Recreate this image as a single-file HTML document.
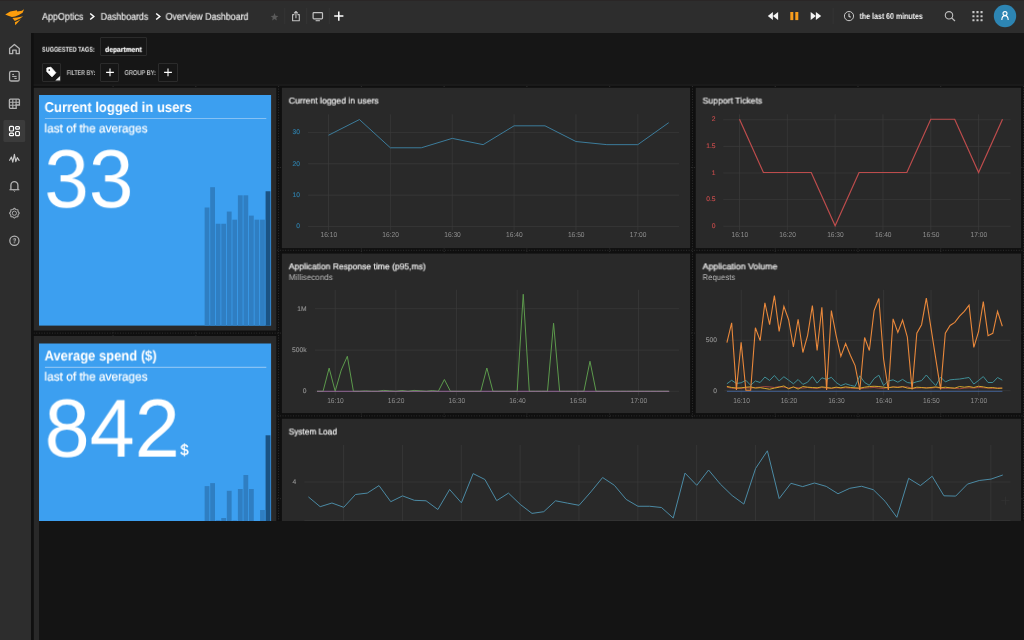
<!DOCTYPE html>
<html lang="en">
<head>
<meta charset="utf-8">
<title>Overview Dashboard - AppOptics</title>
<style>
*{box-sizing:border-box}
html,body{margin:0;padding:0}
body{width:1024px;height:640px;overflow:hidden;background:#161616;font-family:"Liberation Sans",sans-serif;position:relative;color:#eee}
.t{will-change:transform;text-rendering:geometricPrecision;position:absolute;white-space:pre;line-height:1;transform-origin:0 0;margin:0;padding:0;border:0;background:none;font-family:inherit;font-weight:normal;text-decoration:none;display:block}
.ic{position:absolute;display:block;overflow:visible}
.topbar{position:absolute;left:0;top:0;width:1024px;height:33px;background:#2d2d2d;z-index:5;box-shadow:inset 0 1px 0 #2a2626}
.side{position:absolute;left:0;top:33px;width:31px;height:607px;background:#2d2d2d;z-index:4;box-shadow:2.6px 0 0 #101010}
.filters{position:absolute;left:0;top:0;width:1024px;height:86px;z-index:3}
.filters:after{content:"";position:absolute;left:31px;top:84px;width:993px;height:2px;background:#1a1a1a}
.chip{position:absolute;border:1px solid #2b2b2b;border-radius:1px;display:block}
.grid{position:absolute;left:31px;top:86px;width:993px;height:554px;background:#0f0f0f;z-index:1}
.grid>.ic.guides{left:0!important;top:0!important}
.panel{position:absolute;overflow:hidden;margin:0}
.grid .panel{margin-left:-31px;margin-top:-86px}
.cv{position:absolute;left:0;top:0;display:block;will-change:transform}
.ttl{-webkit-text-stroke:0.18px #f0f0f0}
.ts{-webkit-text-stroke:0.2px #fff}
.tag{-webkit-text-stroke:0.15px #fff}
.tu{-webkit-text-stroke:0.3px #fff}
.crumbs .t{-webkit-text-stroke:0.2px #e4e4e4}
.cv text{font-family:"Liberation Sans",sans-serif;text-rendering:geometricPrecision}
.mask{position:absolute;left:39px;top:521px;width:985px;height:119px;background:#141414;z-index:6}
</style>
</head>
<body>
<header class="topbar"><a class="logo" title="SolarWinds"><svg class="ic " style="left:0px;top:0px" width="32" height="33" viewBox="0 0 32 33" role="img" aria-label="SolarWinds"><path fill="#fc9d0c" d="M5.2 14.5 L10.2 11.6 L16.9 10.3 L17.3 11.5 L21.8 10.7 L24.1 9.2 L22.6 12.8 L18.8 15.0 L15.0 16.6 L11.9 16.9 L8.2 15.7 Z"/><path fill="#fc9d0c" d="M12.4 18.1 L17 17.6 L23.2 16.2 L20.1 18.5 L14.8 20.9 Z"/><path fill="#fc9d0c" d="M14.9 22.3 L17.6 21 L20.7 19.3 L17.6 22.8 L15.3 25.2 Z"/></svg></a><nav class="crumbs" aria-label="Breadcrumb"><a class="t" style="left:42px;top:12px;font-size:10.0px;color:#e4e4e4;transform:translate(0.00px,0.86px) rotate(0.01deg) scaleX(0.8952);">AppOptics</a><svg class="ic chev" style="left:88.0px;top:11px" width="8" height="11" viewBox="88.0 11 8 11" role="img" aria-label=""><polyline points="90.2,13.5 93.8,16.5 90.2,19.5" fill="none" stroke="#fff" stroke-width="1.5"/></svg><a class="t" style="left:100px;top:12px;font-size:10.0px;color:#e4e4e4;transform:translate(0.75px,0.86px) rotate(0.01deg) scaleX(0.8809);">Dashboards</a><svg class="ic chev" style="left:153.8px;top:11px" width="8" height="11" viewBox="153.8 11 8 11" role="img" aria-label=""><polyline points="156.0,13.5 159.60000000000002,16.5 156.0,19.5" fill="none" stroke="#fff" stroke-width="1.5"/></svg><a class="t" style="left:165px;top:12px;font-size:10.0px;color:#e4e4e4;transform:translate(0.60px,0.86px) rotate(0.01deg) scaleX(0.8878);">Overview Dashboard</a></nav><div class="tools" role="toolbar"><svg class="ic " style="left:266px;top:6px" width="82" height="22" viewBox="266 6 82 22" role="img" aria-label="Dashboard actions"><polygon points="274.50,13.10 275.56,15.74 278.40,15.93 276.21,17.76 276.91,20.52 274.50,19.00 272.09,20.52 272.79,17.76 270.60,15.93 273.44,15.74" fill="#5a5a5a"/><line x1="284.8" x2="284.8" y1="8" y2="24" stroke="#353535" stroke-width="1"/><line x1="306.7" x2="306.7" y1="8" y2="24" stroke="#353535" stroke-width="1"/><line x1="329.3" x2="329.3" y1="8" y2="24" stroke="#353535" stroke-width="1"/><g fill="none" stroke="#c2c2c2" stroke-width="1.1" stroke-linejoin="round"><path d="M294.4 14.6 H292.6 V20.7 H299.3 V14.6 H297.5"/><path d="M295.95 18.3 V11.6 M294.0 13.4 L295.95 11.5 L297.9 13.4"/></g><g fill="none" stroke="#c2c2c2" stroke-width="1.2"><rect x="313.1" y="12.6" width="9.4" height="6.2" rx="0.8"/><path d="M315.6 20.7 H319.9" stroke-width="1.1"/></g><path d="M334.2 16.1 H343.4 M338.8 11.5 V20.7" stroke="#fff" stroke-width="1.5" fill="none"/></svg></div><div class="playback"><svg class="ic " style="left:764px;top:6px" width="94" height="22" viewBox="764 6 94 22" role="img" aria-label="Playback"><g fill="#f4f4f4"><polygon points="767.8,16 772.9,12 772.9,20"/><polygon points="772.9,16 778.1,12 778.1,20"/><polygon points="810.7,12 815.9,16 810.7,20"/><polygon points="815.9,12 821.2,16 815.9,20"/></g><g fill="#f99d1c"><rect x="790.3" y="12" width="3.0" height="8.1"/><rect x="795.3" y="12" width="3.0" height="8.1"/></g><line x1="833.1" x2="833.1" y1="8" y2="24" stroke="#353535" stroke-width="1"/><g fill="none" stroke="#c8c8c8" stroke-width="1"><circle cx="849" cy="16.1" r="4.6"/><path d="M849 13.5 V16.3 L850.7 17.3" stroke-width="1.2"/></g></svg></div><button class="t range" style="left:859px;top:12px;font-size:8.5px;color:#f2f2f2;font-weight:bold;transform:translate(0.60px,0.00px) rotate(0.01deg) scaleX(0.8268);">the last 60 minutes</button><div class="right"><svg class="ic " style="left:940px;top:2px" width="84" height="30" viewBox="940 2 84 30" role="img" aria-label="Search, apps, account"><g fill="none" stroke="#bdbdbd" stroke-width="1.1"><circle cx="949.0" cy="15.3" r="3.7"/><path d="M951.7 18.0 L955.0 21.0"/></g><g fill="#c8c8c8"><rect x="972.40" y="11.10" width="2.1" height="2.1" rx="0.3"/><rect x="976.45" y="11.10" width="2.1" height="2.1" rx="0.3"/><rect x="980.50" y="11.10" width="2.1" height="2.1" rx="0.3"/><rect x="972.40" y="15.15" width="2.1" height="2.1" rx="0.3"/><rect x="976.45" y="15.15" width="2.1" height="2.1" rx="0.3"/><rect x="980.50" y="15.15" width="2.1" height="2.1" rx="0.3"/><rect x="972.40" y="19.20" width="2.1" height="2.1" rx="0.3"/><rect x="976.45" y="19.20" width="2.1" height="2.1" rx="0.3"/><rect x="980.50" y="19.20" width="2.1" height="2.1" rx="0.3"/></g><circle cx="1005.0" cy="16.0" r="11.2" fill="#2d85b3"/><g fill="none" stroke="#fff" stroke-width="1.1"><circle cx="1005" cy="13.6" r="2.0"/><path d="M1001.8 20.0 C1001.9 16.2 1003.5 15.6 1005 15.6 C1006.5 15.6 1008.1 16.2 1008.2 20.0"/></g></svg></div></header>
<nav class="side" aria-label="Main"><svg class="ic " style="left:0px;top:0px" width="31" height="230" viewBox="0 33 31 230" role="img" aria-label="Navigation icons"><g fill="none" stroke="#b4b4b4" stroke-width="1.3"><path d="M9.6 48.6 L14.4 44.4 L19.3 48.6 V53.7 H16.2 V50.2 H12.7 V53.7 H9.6 Z" stroke-linejoin="round"/></g><g fill="none" stroke="#b4b4b4" stroke-width="1.3"><rect x="9.6" y="71.4" width="9.6" height="9.6" rx="1.6"/><path d="M12.2 74.4 H14 M12.2 76.4 H16.6 M14.4 78.4 H16.8" stroke-width="0.9" stroke="#d0d0d0"/></g><g fill="none" stroke="#b4b4b4" stroke-width="1.3"><path d="M10.4 99.2 H18.4 A1 1 0 0 1 19.4 100.2 V105 H16.2 V108.3 H10.4 A1 1 0 0 1 9.4 107.3 V100.2 A1 1 0 0 1 10.4 99.2 Z"/><path d="M12.8 99.4 V108.2 M16.1 99.4 V105 M9.6 102.3 H19.3 M9.6 105.2 H16.2" stroke-width="1.1"/></g><rect x="3.4" y="120.1" width="21.8" height="21.9" rx="1.6" fill="#3b3b3b"/><g fill="none" stroke="#fff" stroke-width="1.2"><rect x="9.5" y="126.4" width="4.0" height="4.6" rx="0.9"/><rect x="9.5" y="133.2" width="4.0" height="2.4" rx="0.9"/><rect x="15.6" y="126.6" width="3.8" height="2.5" rx="0.9"/><rect x="15.6" y="131.5" width="3.8" height="4.1" rx="0.9"/></g><polyline fill="none" stroke="#c8c8c8" stroke-width="1.15" stroke-linejoin="round" stroke-linecap="round" points="9.6,160.3 11.4,157.0 12.8,162.2 14.4,154.4 15.8,161.6 17.3,157.6 19.1,160.4"/><g fill="none" stroke="#b4b4b4" stroke-width="1.3"><path d="M10.9 189.4 V185.2 A3.5 3.6 0 0 1 17.9 185.2 V189.4"/><path d="M9.5 189.7 H19.3" stroke-width="1.2"/><path d="M13.6 190.6 L14.4 191.3 L15.2 190.6 M14.4 181.2 V181.7" stroke-width="1"/></g><g fill="none" stroke="#a6a6a6"><polygon points="19.30,213.20 18.10,214.73 17.86,216.66 15.93,216.90 14.40,218.10 12.87,216.90 10.94,216.66 10.70,214.73 9.50,213.20 10.70,211.67 10.94,209.74 12.87,209.50 14.40,208.30 15.93,209.50 17.86,209.74 18.10,211.67" stroke-linejoin="round" stroke-width="1.15"/><circle cx="14.4" cy="213.2" r="2.1" stroke-width="1"/></g><g fill="none" stroke="#b4b4b4" stroke-width="1.3"><circle cx="14.4" cy="240.8" r="4.6" stroke-width="1.2"/></g></svg><span class="t q" style="left:12px;top:204px;font-size:7.2px;color:#d0d0d0;font-weight:bold;transform:translate(0.70px,0.30px) rotate(0.01deg) scaleX(0.8500);">?</span></nav>
<main>
<section class="filters" aria-label="Filters"><label class="t lbl" style="left:42px;top:46px;font-size:7.0px;color:#f2f2f2;font-weight:bold;transform:translate(0.00px,0.75px) rotate(0.01deg) scaleX(0.7857);">SUGGESTED TAGS:</label><span class="chip" style="left:100px;top:37px;width:47px;height:19px"></span><button class="t tag" style="left:105px;top:45px;font-size:7.2px;color:#ffffff;font-weight:bold;transform:translate(0.10px,0.90px) rotate(0.01deg) scaleX(0.9360);">department</button><span class="chip" style="left:42px;top:63px;width:19px;height:19px"></span><svg class="ic " style="left:43px;top:64px" width="18" height="18" viewBox="43 64 18 18" role="img" aria-label="Tags"><path fill="#fff" stroke="#fff" stroke-width="0.9" stroke-linejoin="round" d="M46.9 68.0 L50.9 67.2 L55.8 72.7 L52.0 76.8 L46.9 71.6 Z"/><circle cx="49.3" cy="70.0" r="0.85" fill="#151515"/><polygon points="60.1,76.1 60.1,80.6 55.3,80.6" fill="#f0f0f0"/></svg><label class="t lbl" style="left:66px;top:70px;font-size:7.0px;color:#bdbdbd;font-weight:bold;transform:translate(0.75px,0.05px) rotate(0.01deg) scaleX(0.7609);">FILTER BY:</label><span class="chip" style="left:100px;top:63px;width:19px;height:19px"></span><svg class="ic " style="left:103.6px;top:66px" width="12" height="12" viewBox="103.6 66 12 12" role="img" aria-label="Add"><path d="M105.69999999999999 72.4 H113.5 M109.6 68.5 V76.3" stroke="#fff" stroke-width="1.1" fill="none"/></svg><label class="t lbl" style="left:124px;top:70px;font-size:7.0px;color:#bdbdbd;font-weight:bold;transform:translate(0.50px,0.05px) rotate(0.01deg) scaleX(0.8050);">GROUP BY:</label><span class="chip" style="left:158px;top:63px;width:20px;height:19px"></span><svg class="ic " style="left:161.6px;top:66px" width="12" height="12" viewBox="161.6 66 12 12" role="img" aria-label="Add"><path d="M163.7 72.4 H171.5 M167.6 68.5 V76.3" stroke="#fff" stroke-width="1.1" fill="none"/></svg></section>
<section class="grid" aria-label="Overview Dashboard"><svg class="ic guides" style="left:31px;top:86px" width="993" height="435" viewBox="31 86 993 435" role="img" aria-label=""><g stroke="#333333" stroke-width="0.9" stroke-dasharray="1 1.62" fill="none"><line x1="113.06" x2="113.06" y1="86" y2="521"/><line x1="195.83" x2="195.83" y1="86" y2="521"/><line x1="278.60" x2="278.60" y1="86" y2="521"/><line x1="361.37" x2="361.37" y1="86" y2="521"/><line x1="444.14" x2="444.14" y1="86" y2="521"/><line x1="526.91" x2="526.91" y1="86" y2="521"/><line x1="609.68" x2="609.68" y1="86" y2="521"/><line x1="692.45" x2="692.45" y1="86" y2="521"/><line x1="775.22" x2="775.22" y1="86" y2="521"/><line x1="857.99" x2="857.99" y1="86" y2="521"/><line x1="940.76" x2="940.76" y1="86" y2="521"/><line x1="1023.53" x2="1023.53" y1="86" y2="521"/><line x1="31" x2="1024" y1="167.50" y2="167.50"/><line x1="31" x2="1024" y1="250.30" y2="250.30"/><line x1="31" x2="1024" y1="333.10" y2="333.10"/><line x1="31" x2="1024" y1="415.90" y2="415.90"/><line x1="31" x2="1024" y1="498.70" y2="498.70"/></g></svg><article class="panel tile users" aria-label="Current logged in users" style="left:33px;top:87px;width:244px;height:244px"><svg class="cv" width="244" height="244" viewBox="33 87 244 244"><rect x="33.4" y="87.8" width="242.90" height="242.80" fill="#292929"/><rect x="39.0" y="95.00" width="232.10" height="230.60" fill="#3c9ff0"/><g><rect x="204.65" y="207.50" width="4.8" height="118.10" fill="#2f7ec2"/><rect x="210.19" y="187.20" width="4.8" height="138.40" fill="#2f7ec2"/><rect x="215.73" y="223.74" width="4.8" height="101.86" fill="#2f7ec2"/><rect x="221.27" y="223.74" width="4.8" height="101.86" fill="#2f7ec2"/><rect x="226.81" y="211.56" width="4.8" height="114.04" fill="#2f7ec2"/><rect x="232.35" y="219.68" width="4.8" height="105.92" fill="#2f7ec2"/><rect x="237.89" y="195.32" width="4.8" height="130.28" fill="#2f7ec2"/><rect x="243.43" y="195.32" width="4.8" height="130.28" fill="#2f7ec2"/><rect x="248.97" y="215.62" width="4.8" height="109.98" fill="#2f7ec2"/><rect x="254.51" y="219.68" width="4.8" height="105.92" fill="#2f7ec2"/><rect x="260.05" y="219.68" width="4.8" height="105.92" fill="#2f7ec2"/><rect x="265.59" y="191.26" width="4.8" height="134.34" fill="#1b5384"/></g><line x1="44.9" x2="266.3" y1="118.50" y2="118.50" stroke="#86c1f4" stroke-width="1.1"/></svg><h2 class="t tt" style="left:11px;top:14px;font-size:14.2px;color:#fff;font-weight:bold;transform:translate(0.55px,0.00px) rotate(0.01deg) scaleX(0.9202);">Current logged in users</h2><p class="t ts" style="left:11px;top:35px;font-size:12.1px;color:#fff;transform:translate(0.50px,0.40px) rotate(0.01deg) scaleX(0.9772);">last of the averages</p><div class="t tv" style="left:11px;top:52px;font-size:82.2px;color:#fff;transform:translate(0.38px,0.24px) rotate(0.01deg) scaleX(0.9736);">33</div></article><article class="panel tile spend" aria-label="Average spend ($)" style="left:33px;top:336px;width:244px;height:304px"><svg class="cv" width="244" height="304" viewBox="33 336 244 304"><rect x="33.4" y="336.0" width="242.90" height="304.00" fill="#292929"/><rect x="39.0" y="343.50" width="232.10" height="296.50" fill="#3c9ff0"/><g><rect x="204.65" y="486.10" width="4.8" height="153.90" fill="#2f7ec2"/><rect x="210.19" y="483.10" width="4.8" height="156.90" fill="#2f7ec2"/><rect x="215.73" y="520.30" width="4.8" height="119.70" fill="#2f7ec2"/><rect x="221.27" y="518.00" width="4.8" height="122.00" fill="#2f7ec2"/><rect x="226.81" y="490.80" width="4.8" height="149.20" fill="#2f7ec2"/><rect x="232.35" y="520.50" width="4.8" height="119.50" fill="#2f7ec2"/><rect x="237.89" y="489.00" width="4.8" height="151.00" fill="#2f7ec2"/><rect x="243.43" y="475.00" width="4.8" height="165.00" fill="#2f7ec2"/><rect x="248.97" y="489.00" width="4.8" height="151.00" fill="#2f7ec2"/><rect x="260.05" y="510.00" width="4.8" height="130.00" fill="#2f7ec2"/><rect x="265.59" y="435.30" width="4.8" height="204.70" fill="#1b5384"/></g><line x1="44.9" x2="266.3" y1="367.40" y2="367.40" stroke="#86c1f4" stroke-width="1.1"/></svg><h2 class="t tt" style="left:11px;top:13px;font-size:14.2px;color:#fff;font-weight:bold;transform:translate(0.55px,0.50px) rotate(0.01deg) scaleX(0.9161);">Average spend ($)</h2><p class="t ts" style="left:11px;top:34px;font-size:12.1px;color:#fff;transform:translate(0.50px,0.60px) rotate(0.01deg) scaleX(0.9772);">last of the averages</p><div class="t tv" style="left:11px;top:52px;font-size:82.2px;color:#fff;transform:translate(0.64px,0.64px) rotate(0.01deg) scaleX(0.9853);">842</div><span class="t tu" style="left:147px;top:107px;font-size:15.5px;color:#fff;transform:translate(0.50px,0.10px) rotate(0.01deg) scaleX(0.9333);">$</span></article><article class="panel chart c1" aria-label="Current logged in users" style="left:281px;top:87px;width:410px;height:162px"><svg class="cv" width="410" height="162" viewBox="281 87 410 162"><rect x="281.9" y="87.8" width="408.20" height="160.30" fill="#292929"/><g stroke="#3b3b3b" stroke-width="0.7" shape-rendering="geometricPrecision"><line x1="308.1" x2="679.0" y1="226.55" y2="226.55"/><line x1="308.1" x2="679.0" y1="195.17" y2="195.17"/><line x1="308.1" x2="679.0" y1="163.78" y2="163.78"/><line x1="308.1" x2="679.0" y1="132.40" y2="132.40"/><line y1="114.3" y2="230.6" x1="328.50" x2="328.50"/><line y1="114.3" y2="230.6" x1="390.36" x2="390.36"/><line y1="114.3" y2="230.6" x1="452.22" x2="452.22"/><line y1="114.3" y2="230.6" x1="514.08" x2="514.08"/><line y1="114.3" y2="230.6" x1="575.94" x2="575.94"/><line y1="114.3" y2="230.6" x1="637.80" x2="637.80"/></g><g class="ax"><text stroke="#2f7ea8" stroke-width="0.15" x="300.00" y="134.30" font-size="6.7" fill="#2f7ea8" text-anchor="end">30</text><text stroke="#2f7ea8" stroke-width="0.15" x="300.00" y="165.68" font-size="6.7" fill="#2f7ea8" text-anchor="end">20</text><text stroke="#2f7ea8" stroke-width="0.15" x="300.00" y="197.07" font-size="6.7" fill="#2f7ea8" text-anchor="end">10</text><text stroke="#2f7ea8" stroke-width="0.15" x="300.00" y="228.45" font-size="6.7" fill="#2f7ea8" text-anchor="end">0</text><text x="328.80" y="237.00" font-size="7.2" fill="#8f8f8f" text-anchor="middle" textLength="16.60" lengthAdjust="spacingAndGlyphs">16:10</text><text x="390.66" y="237.00" font-size="7.2" fill="#8f8f8f" text-anchor="middle" textLength="16.60" lengthAdjust="spacingAndGlyphs">16:20</text><text x="452.52" y="237.00" font-size="7.2" fill="#8f8f8f" text-anchor="middle" textLength="16.60" lengthAdjust="spacingAndGlyphs">16:30</text><text x="514.38" y="237.00" font-size="7.2" fill="#8f8f8f" text-anchor="middle" textLength="16.60" lengthAdjust="spacingAndGlyphs">16:40</text><text x="576.24" y="237.00" font-size="7.2" fill="#8f8f8f" text-anchor="middle" textLength="16.60" lengthAdjust="spacingAndGlyphs">16:50</text><text x="638.10" y="237.00" font-size="7.2" fill="#8f8f8f" text-anchor="middle" textLength="16.60" lengthAdjust="spacingAndGlyphs">17:00</text></g><polyline fill="none" stroke="#3c7c9b" stroke-width="1.0" stroke-linejoin="miter" points="328.50,135.24 359.43,119.55 390.36,147.79 421.29,147.79 452.22,138.38 483.15,144.65 514.08,125.82 545.01,125.82 575.94,141.52 606.87,144.65 637.80,144.65 668.73,122.69"/></svg><h3 class="t ttl" style="left:7px;top:9px;font-size:8.6px;color:#f0f0f0;transform:translate(0.75px,0.57px) rotate(0.01deg) scaleX(1.0064);">Current logged in users</h3></article><article class="panel chart c2" aria-label="Support Tickets" style="left:695px;top:87px;width:327px;height:162px"><svg class="cv" width="327" height="162" viewBox="695 87 327 162"><rect x="695.75" y="87.8" width="325.35" height="160.30" fill="#292929"/><g stroke="#3b3b3b" stroke-width="0.7" shape-rendering="geometricPrecision"><line x1="723.3" x2="1010.5" y1="226.25" y2="226.25"/><line x1="723.3" x2="1010.5" y1="199.62" y2="199.62"/><line x1="723.3" x2="1010.5" y1="173.00" y2="173.00"/><line x1="723.3" x2="1010.5" y1="146.38" y2="146.38"/><line x1="723.3" x2="1010.5" y1="119.75" y2="119.75"/><line y1="114.3" y2="230.6" x1="739.50" x2="739.50"/><line y1="114.3" y2="230.6" x1="787.32" x2="787.32"/><line y1="114.3" y2="230.6" x1="835.14" x2="835.14"/><line y1="114.3" y2="230.6" x1="882.96" x2="882.96"/><line y1="114.3" y2="230.6" x1="930.78" x2="930.78"/><line y1="114.3" y2="230.6" x1="978.60" x2="978.60"/></g><g class="ax"><text stroke="#c24b4b" stroke-width="0.15" x="715.60" y="121.45" font-size="6.7" fill="#c24b4b" text-anchor="end">2</text><text stroke="#c24b4b" stroke-width="0.15" x="715.60" y="148.07" font-size="6.7" fill="#c24b4b" text-anchor="end">1.5</text><text stroke="#c24b4b" stroke-width="0.15" x="715.60" y="174.70" font-size="6.7" fill="#c24b4b" text-anchor="end">1</text><text stroke="#c24b4b" stroke-width="0.15" x="715.60" y="201.32" font-size="6.7" fill="#c24b4b" text-anchor="end">0.5</text><text stroke="#c24b4b" stroke-width="0.15" x="715.60" y="227.95" font-size="6.7" fill="#c24b4b" text-anchor="end">0</text><text x="739.80" y="237.00" font-size="7.2" fill="#8f8f8f" text-anchor="middle" textLength="16.60" lengthAdjust="spacingAndGlyphs">16:10</text><text x="787.62" y="237.00" font-size="7.2" fill="#8f8f8f" text-anchor="middle" textLength="16.60" lengthAdjust="spacingAndGlyphs">16:20</text><text x="835.44" y="237.00" font-size="7.2" fill="#8f8f8f" text-anchor="middle" textLength="16.60" lengthAdjust="spacingAndGlyphs">16:30</text><text x="883.26" y="237.00" font-size="7.2" fill="#8f8f8f" text-anchor="middle" textLength="16.60" lengthAdjust="spacingAndGlyphs">16:40</text><text x="931.08" y="237.00" font-size="7.2" fill="#8f8f8f" text-anchor="middle" textLength="16.60" lengthAdjust="spacingAndGlyphs">16:50</text><text x="978.90" y="237.00" font-size="7.2" fill="#8f8f8f" text-anchor="middle" textLength="16.60" lengthAdjust="spacingAndGlyphs">17:00</text></g><polyline fill="none" stroke="#bd4c4c" stroke-width="1.2" stroke-linejoin="miter" points="739.50,119.25 763.41,172.50 787.32,172.50 811.23,172.50 835.14,225.75 859.05,172.50 882.96,172.50 906.87,172.50 930.78,119.25 954.69,119.25 978.60,172.50 1002.51,119.25"/></svg><h3 class="t ttl" style="left:7px;top:9px;font-size:8.6px;color:#f0f0f0;transform:translate(0.60px,0.57px) rotate(0.01deg) scaleX(1.0070);">Support Tickets</h3></article><article class="panel chart c3" aria-label="Application Response time (p95,ms)" style="left:281px;top:253px;width:410px;height:161px"><svg class="cv" width="410" height="161" viewBox="281 253 410 161"><rect x="281.9" y="253.6" width="408.20" height="159.50" fill="#292929"/><g stroke="#3b3b3b" stroke-width="0.7" shape-rendering="geometricPrecision"><line x1="315.0" x2="679.0" y1="308.70" y2="308.70"/><line x1="315.0" x2="679.0" y1="350.10" y2="350.10"/><line x1="315.0" x2="679.0" y1="391.25" y2="391.25"/><line y1="289.8" y2="395.5" x1="335.20" x2="335.20"/><line y1="289.8" y2="395.5" x1="395.86" x2="395.86"/><line y1="289.8" y2="395.5" x1="456.52" x2="456.52"/><line y1="289.8" y2="395.5" x1="517.18" x2="517.18"/><line y1="289.8" y2="395.5" x1="577.84" x2="577.84"/><line y1="289.8" y2="395.5" x1="638.50" x2="638.50"/></g><g class="ax"><text stroke="#8f8f8f" stroke-width="0.15" x="306.60" y="310.90" font-size="6.7" fill="#8f8f8f" text-anchor="end">1M</text><text stroke="#8f8f8f" stroke-width="0.15" x="306.60" y="352.30" font-size="6.7" fill="#8f8f8f" text-anchor="end">500k</text><text stroke="#8f8f8f" stroke-width="0.15" x="306.60" y="393.45" font-size="6.7" fill="#8f8f8f" text-anchor="end">0</text><text x="335.50" y="402.70" font-size="7.2" fill="#8f8f8f" text-anchor="middle" textLength="16.60" lengthAdjust="spacingAndGlyphs">16:10</text><text x="396.16" y="402.70" font-size="7.2" fill="#8f8f8f" text-anchor="middle" textLength="16.60" lengthAdjust="spacingAndGlyphs">16:20</text><text x="456.82" y="402.70" font-size="7.2" fill="#8f8f8f" text-anchor="middle" textLength="16.60" lengthAdjust="spacingAndGlyphs">16:30</text><text x="517.48" y="402.70" font-size="7.2" fill="#8f8f8f" text-anchor="middle" textLength="16.60" lengthAdjust="spacingAndGlyphs">16:40</text><text x="578.14" y="402.70" font-size="7.2" fill="#8f8f8f" text-anchor="middle" textLength="16.60" lengthAdjust="spacingAndGlyphs">16:50</text><text x="638.80" y="402.70" font-size="7.2" fill="#8f8f8f" text-anchor="middle" textLength="16.60" lengthAdjust="spacingAndGlyphs">17:00</text></g><polyline fill="none" stroke="#5c9a4c" stroke-width="1.0" stroke-linejoin="miter" points="317.00,391.25 323.07,391.25 329.13,368.10 335.20,391.25 341.26,370.00 347.33,356.25 353.40,391.25 359.46,391.25 365.53,390.90 371.59,391.25 377.66,391.25 383.73,390.40 389.79,390.90 395.86,391.25 401.92,390.50 407.99,391.25 414.06,390.40 420.12,390.80 426.19,391.25 432.25,390.60 438.32,391.25 444.39,379.50 450.45,391.25 456.52,391.25 462.58,391.25 468.65,391.25 474.72,391.25 480.78,391.25 486.85,368.00 492.91,391.25 498.98,391.25 505.05,391.25 511.11,391.25 517.18,391.25 523.24,294.25 529.31,391.25 535.38,391.25 541.44,391.25 547.51,391.25 553.57,323.25 559.64,391.25 565.71,391.25 571.77,391.25 577.84,391.25 583.90,391.25 589.97,361.25 596.04,391.25 602.10,391.25 608.17,391.25 614.23,391.25 620.30,391.25 626.37,391.25 632.43,391.25 638.50,391.25 644.56,391.25 650.63,391.25 656.70,391.25 662.76,391.25 668.83,391.25"/><polyline fill="none" stroke="#98699c" stroke-width="0.95" stroke-linejoin="miter" points="317.00,391.30 669.30,391.30"/></svg><h3 class="t ttl" style="left:7px;top:9px;font-size:8.6px;color:#f0f0f0;transform:translate(0.75px,0.37px) rotate(0.01deg) scaleX(0.9915);">Application Response time (p95,ms)</h3><p class="t sub" style="left:7px;top:21px;font-size:8.2px;color:#b5b5b5;transform:translate(0.75px,0.00px) rotate(0.01deg) scaleX(0.9888);">Milliseconds</p></article><article class="panel chart c4" aria-label="Application Volume" style="left:695px;top:253px;width:327px;height:161px"><svg class="cv" width="327" height="161" viewBox="695 253 327 161"><rect x="695.75" y="253.6" width="325.35" height="159.50" fill="#292929"/><g stroke="#3b3b3b" stroke-width="0.7" shape-rendering="geometricPrecision"><line x1="724.5" x2="1010.5" y1="340.30" y2="340.30"/><line x1="724.5" x2="1010.5" y1="390.70" y2="390.70"/><line y1="289.8" y2="395.5" x1="741.25" x2="741.25"/><line y1="289.8" y2="395.5" x1="788.70" x2="788.70"/><line y1="289.8" y2="395.5" x1="836.15" x2="836.15"/><line y1="289.8" y2="395.5" x1="883.60" x2="883.60"/><line y1="289.8" y2="395.5" x1="931.05" x2="931.05"/><line y1="289.8" y2="395.5" x1="978.50" x2="978.50"/></g><g class="ax"><text stroke="#8f8f8f" stroke-width="0.15" x="717.00" y="342.20" font-size="6.7" fill="#8f8f8f" text-anchor="end">500</text><text stroke="#8f8f8f" stroke-width="0.15" x="717.00" y="392.90" font-size="6.7" fill="#8f8f8f" text-anchor="end">0</text><text x="741.55" y="402.70" font-size="7.2" fill="#8f8f8f" text-anchor="middle" textLength="16.60" lengthAdjust="spacingAndGlyphs">16:10</text><text x="789.00" y="402.70" font-size="7.2" fill="#8f8f8f" text-anchor="middle" textLength="16.60" lengthAdjust="spacingAndGlyphs">16:20</text><text x="836.45" y="402.70" font-size="7.2" fill="#8f8f8f" text-anchor="middle" textLength="16.60" lengthAdjust="spacingAndGlyphs">16:30</text><text x="883.90" y="402.70" font-size="7.2" fill="#8f8f8f" text-anchor="middle" textLength="16.60" lengthAdjust="spacingAndGlyphs">16:40</text><text x="931.35" y="402.70" font-size="7.2" fill="#8f8f8f" text-anchor="middle" textLength="16.60" lengthAdjust="spacingAndGlyphs">16:50</text><text x="978.80" y="402.70" font-size="7.2" fill="#8f8f8f" text-anchor="middle" textLength="16.60" lengthAdjust="spacingAndGlyphs">17:00</text></g><polyline fill="none" stroke="#3f8e96" stroke-width="1.0" stroke-linejoin="miter" points="726.90,383.75 731.65,380.31 736.40,383.44 741.14,382.81 745.89,380.31 750.64,385.31 755.39,380.94 760.14,382.50 764.89,377.03 769.63,380.47 774.38,375.47 779.13,380.94 783.88,376.72 788.63,380.16 793.38,383.75 798.12,379.53 802.87,384.38 807.62,382.19 812.37,376.41 817.12,383.12 821.87,377.81 826.61,379.38 831.36,377.34 836.11,382.50 840.86,385.62 845.61,383.75 850.36,385.31 855.10,386.41 859.85,375.78 864.60,382.50 869.35,385.31 874.10,378.59 878.85,375.16 883.59,385.62 888.34,380.94 893.09,379.84 897.84,382.19 902.59,379.38 907.34,382.50 912.08,383.28 916.83,381.72 921.58,380.62 926.33,375.00 931.08,380.62 935.83,385.62 940.57,377.03 945.32,381.88 950.07,379.84 954.82,379.38 959.57,379.06 964.32,378.28 969.06,377.50 973.81,384.06 978.56,380.47 983.31,376.56 988.06,382.50 992.80,382.50 997.55,377.50 1002.30,380.16"/><polyline fill="none" stroke="#b0483f" stroke-width="0.9" stroke-linejoin="miter" points="726.90,387.19 731.65,388.12 736.40,388.44 741.14,388.44 745.89,387.81 750.64,388.12 755.39,387.50 760.14,387.19 764.89,386.56 769.63,386.88 774.38,387.50 779.13,386.56 783.88,387.19 788.63,388.12 793.38,387.19 798.12,387.81 802.87,388.12 807.62,387.50 812.37,388.12 817.12,388.44 821.87,387.50 826.61,388.12 831.36,388.44 836.11,387.81 840.86,388.12 845.61,387.81 850.36,388.12 855.10,388.44 859.85,388.75 864.60,388.12 869.35,387.81 874.10,387.50 878.85,388.12 883.59,388.44 888.34,387.50 893.09,387.19 897.84,386.88 902.59,387.19 907.34,386.88 912.08,388.44 916.83,388.12 921.58,387.81 926.33,387.50 931.08,388.12 935.83,387.50 940.57,388.12 945.32,388.44 950.07,388.12 954.82,388.44 959.57,388.75 964.32,388.12 969.06,387.81 973.81,388.12 978.56,387.50 983.31,387.81 988.06,388.12 992.80,388.44 997.55,387.81 1002.30,388.12"/><polyline fill="none" stroke="#d6a62c" stroke-width="1.0" stroke-linejoin="miter" points="726.90,386.41 731.65,387.50 736.40,387.97 741.14,387.81 745.89,387.19 750.64,386.88 755.39,388.12 760.14,387.66 764.89,388.44 769.63,389.22 774.38,388.12 779.13,387.19 783.88,385.94 788.63,388.75 793.38,386.88 798.12,389.06 802.87,386.56 807.62,387.19 812.37,387.50 817.12,387.81 821.87,386.88 826.61,387.50 831.36,388.12 836.11,387.19 840.86,387.81 845.61,386.88 850.36,387.50 855.10,387.81 859.85,388.12 864.60,387.19 869.35,386.56 874.10,386.25 878.85,386.56 883.59,387.19 888.34,387.81 893.09,386.88 897.84,387.50 902.59,386.56 907.34,388.12 912.08,388.44 916.83,387.19 921.58,387.50 926.33,388.12 931.08,387.50 935.83,386.88 940.57,387.81 945.32,387.19 950.07,387.81 954.82,388.12 959.57,386.56 964.32,387.19 969.06,386.56 973.81,387.50 978.56,386.25 983.31,386.88 988.06,387.81 992.80,387.50 997.55,388.44 1002.30,388.12"/><polyline fill="none" stroke="#4668a0" stroke-width="0.9" stroke-linejoin="miter" points="726.90,391.30 1002.40,391.30"/><polyline fill="none" stroke="#e9883b" stroke-width="1.1" stroke-linejoin="miter" points="726.90,342.66 731.65,322.81 736.40,390.00 741.14,342.19 745.89,390.31 750.64,390.31 755.39,327.81 760.14,340.62 764.89,302.81 769.63,324.69 774.38,295.47 779.13,331.41 783.88,306.41 788.63,319.69 793.38,347.03 798.12,319.22 802.87,352.50 807.62,335.31 812.37,305.62 817.12,350.47 821.87,307.19 826.61,390.00 831.36,310.62 836.11,335.31 840.86,356.41 845.61,343.44 850.36,355.16 855.10,365.62 859.85,390.00 864.60,337.50 869.35,350.47 874.10,310.62 878.85,298.44 883.59,359.06 888.34,390.00 893.09,318.91 897.84,332.50 902.59,320.00 907.34,337.19 912.08,389.53 916.83,333.28 921.58,324.69 926.33,298.12 931.08,328.59 935.83,359.06 940.57,389.53 945.32,333.28 950.07,325.47 954.82,322.34 959.57,316.09 964.32,311.41 969.06,305.16 973.81,347.34 978.56,331.72 983.31,301.56 988.06,335.62 992.80,333.28 997.55,311.41 1002.30,326.25"/></svg><h3 class="t ttl" style="left:7px;top:9px;font-size:8.6px;color:#f0f0f0;transform:translate(0.60px,0.37px) rotate(0.01deg) scaleX(1.0230);">Application Volume</h3><p class="t sub" style="left:7px;top:21px;font-size:8.2px;color:#b5b5b5;transform:translate(0.60px,0.00px) rotate(0.01deg) scaleX(0.9422);">Requests</p></article><article class="panel chart c5" aria-label="System Load" style="left:281px;top:418px;width:741px;height:222px"><svg class="cv" width="741" height="222" viewBox="281 418 741 222"><rect x="281.9" y="418.75" width="739.20" height="221.25" fill="#292929"/><g stroke="#3b3b3b" stroke-width="0.7" shape-rendering="geometricPrecision"><line x1="304.4" x2="1010.4" y1="482.00" y2="482.00"/><line x1="304.4" x2="1010.4" y1="520.70" y2="520.70"/><line y1="445.0" y2="640" x1="343.60" x2="343.60"/><line y1="445.0" y2="640" x1="402.44" x2="402.44"/><line y1="445.0" y2="640" x1="461.28" x2="461.28"/><line y1="445.0" y2="640" x1="520.12" x2="520.12"/><line y1="445.0" y2="640" x1="578.96" x2="578.96"/><line y1="445.0" y2="640" x1="637.80" x2="637.80"/><line y1="445.0" y2="640" x1="696.64" x2="696.64"/><line y1="445.0" y2="640" x1="755.48" x2="755.48"/><line y1="445.0" y2="640" x1="814.32" x2="814.32"/><line y1="445.0" y2="640" x1="873.16" x2="873.16"/><line y1="445.0" y2="640" x1="932.00" x2="932.00"/><line y1="445.0" y2="640" x1="990.84" x2="990.84"/></g><g class="ax"><text stroke="#8f8f8f" stroke-width="0.15" x="296.20" y="484.20" font-size="6.7" fill="#8f8f8f" text-anchor="end">4</text></g><polyline fill="none" stroke="#4b8aa4" stroke-width="1.0" stroke-linejoin="miter" points="308.40,496.90 320.17,506.70 331.94,503.00 343.71,507.30 355.48,494.50 367.25,493.10 379.01,485.60 390.78,501.70 402.55,495.90 414.32,500.30 426.09,500.80 437.86,509.50 449.63,489.50 461.40,502.80 473.17,473.60 484.93,479.50 496.70,500.60 508.47,493.10 520.24,504.40 532.01,513.40 543.78,511.70 555.55,500.80 567.32,503.10 579.09,505.30 590.86,491.90 602.62,477.50 614.39,485.30 626.16,499.40 637.93,506.25 649.70,506.25 661.47,507.50 673.24,518.00 685.01,473.10 696.78,485.30 708.55,470.00 720.32,484.10 732.08,495.50 743.85,504.10 755.62,468.40 767.39,450.80 779.16,498.60 790.93,483.30 802.70,486.60 814.47,483.00 826.24,486.40 838.00,493.75 849.77,488.30 861.54,486.25 873.31,489.70 885.08,501.25 896.85,517.30 908.62,478.30 920.39,485.60 932.16,476.25 943.93,495.80 955.69,496.10 967.46,484.10 979.23,480.50 991.00,479.10 1002.77,475.00"/><path d="M1001.3 500.7 H1009.5 M1005.4 496.6 V504.8" stroke="#333" stroke-width="0.8" fill="none"/></svg><h3 class="t ttl" style="left:7px;top:9px;font-size:8.6px;color:#f0f0f0;transform:translate(0.75px,0.52px) rotate(0.01deg) scaleX(0.9607);">System Load</h3></article></section>
</main>
<div class="mask"></div>
</body>
</html>
